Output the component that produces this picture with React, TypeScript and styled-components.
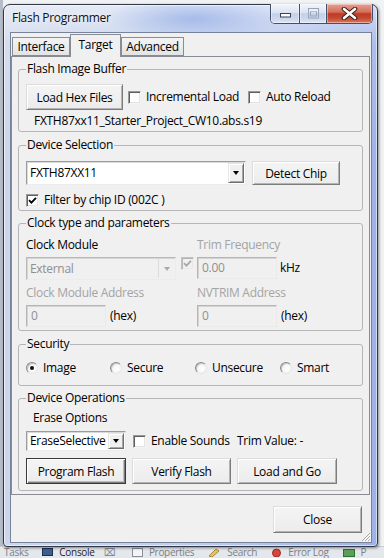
import React from "react";
import styled, { createGlobalStyle, css } from "styled-components";

const FONT = `"Open Sans", "Noto Sans", "DejaVu Sans", sans-serif`;

const GlobalStyle = createGlobalStyle`
  html, body { margin: 0; padding: 0; }
  body {
    width: 384px; height: 558px; overflow: hidden;
    font-family: ${FONT}; font-size: 12px; color: #000;
    letter-spacing: -0.3px;
    background: #eceef1;
  }
  * { box-sizing: border-box; }
`;

/* ---------- desktop (IDE behind the dialog) ---------- */
const Desktop = styled.div`
  position: relative;
  width: 384px;
  height: 558px;
  overflow: hidden;
  display: flex;
  flex-direction: column;
  justify-content: flex-end;
  background: linear-gradient(90deg, #b7bdc8 0px, #b7bdc8 3px, #f1f2f4 3px);
`;

const EclipseBar = styled.div`
  height: 12px;
  display: flex;
  align-items: flex-start;
  overflow: hidden;
  background: #e4e7eb;
  box-shadow: inset 0 1px 0 #c9ced6;
`;

const EclipseItem = styled.span<{ $ml: number; $dim?: boolean }>`
  margin-left: ${(p) => p.$ml}px;
  line-height: 12px;
  height: 12px;
  font-size: 10px;
  color: ${(p) => (p.$dim ? "#7b7f86" : "#1c1c1c")};
  white-space: nowrap;
  display: inline-flex;
  align-items: center;
`;

/* ---------- window frame ---------- */
const Window = styled.div`
  position: absolute;
  left: 3px;
  top: 4px;
  width: 375px;
  height: 543px;
  border: 1px solid #323946;
  border-radius: 7px 7px 4px 4px;
  padding: 0 5px 3px 6px;
  display: flex;
  flex-direction: column;
  background:
    radial-gradient(ellipse 90px 22px at 190px 14px, rgba(150, 175, 230, 0.75), rgba(150, 175, 230, 0)),
    linear-gradient(180deg, rgba(255, 255, 255, 0.55) 0px, rgba(255, 255, 255, 0.15) 40px, rgba(255, 255, 255, 0) 160px),
    linear-gradient(90deg, #cdd6ea 0%, #bccbec 55%, #9eb2e8 100%);
  box-shadow: inset 0 0 0 1px rgba(255, 255, 255, 0.55), 1px 1px 3px rgba(0, 0, 0, 0.45);
`;

const TitleBar = styled.div`
  height: 27px;
  flex: none;
  display: flex;
  align-items: flex-start;
`;

const TitleText = styled.div`
  margin: 5px 0 0 2px;
  line-height: 16px;
  font-size: 12px;
  color: #111;
  text-shadow: 0 0 6px rgba(255, 255, 255, 0.9);
`;

const CaptionGroup = styled.div`
  margin: -1px -1px 0 auto;
  height: 20px;
  display: flex;
  border: 1px solid #44506a;
  border-top: none;
  border-radius: 0 0 5px 5px;
  overflow: hidden;
`;

const CaptionButton = styled.div<{ $w: number; $close?: boolean; $divider?: boolean }>`
  width: ${(p) => p.$w}px;
  height: 19px;
  display: flex;
  align-items: center;
  justify-content: center;
  ${(p) => p.$divider && css`border-left: 1px solid #44506a;`}
  background: ${(p) =>
    p.$close
      ? "linear-gradient(180deg, #e5a092 0%, #d5705c 42%, #c03a22 52%, #c44a32 75%, #da7a62 100%)"
      : "linear-gradient(180deg, #f3f6fb 0%, #dbe3f2 45%, #c3d0ea 52%, #cdd8ef 80%, #dfe7f6 100%)"};
  box-shadow: inset 0 0 0 1px rgba(255, 255, 255, 0.4);
`;

const Client = styled.div`
  position: relative;
  flex: 1;
  display: flex;
  flex-direction: column;
  background: #f0f0f0;
  border: 1px solid #76839a;
`;

/* ---------- tabs ---------- */
const TabStrip = styled.div`
  height: 24px;
  flex: none;
  margin-bottom: -1px;
  padding-left: 1px;
  display: flex;
  align-items: flex-end;
`;

const Tab = styled.div<{ $w: number; $active?: boolean }>`
  position: relative;
  z-index: ${(p) => (p.$active ? 2 : 1)};
  width: ${(p) => p.$w}px;
  height: ${(p) => (p.$active ? 23 : 19)}px;
  margin-bottom: ${(p) => (p.$active ? 0 : 1)}px;
  display: flex;
  align-items: center;
  justify-content: center;
  padding-bottom: ${(p) => (p.$active ? 3 : 0)}px;
  border: 1px solid #898c95;
  border-bottom: ${(p) => (p.$active ? "none" : "1px solid #898c95")};
  background: ${(p) => (p.$active ? "#f0f0f0" : "linear-gradient(180deg, #f4f4f4 0%, #ececec 50%, #e3e3e3 100%)")};
  font-size: 12px;
  line-height: 16px;
  color: #000;
`;

const Panel = styled.div`
  position: relative;
  z-index: 1;
  flex: none;
  margin-right: 1px;
  padding: 4px 6px 3px 6px;
  border: 1px solid #898c95;
  background: #f0f0f0;
`;

/* ---------- group boxes ---------- */
const Group = styled.fieldset<{ $pt: number; $pb: number; $mt?: number }>`
  margin: ${(p) => p.$mt ?? 0}px 0 0 0;
  min-width: 0;
  padding: ${(p) => p.$pt}px 8px ${(p) => p.$pb}px 7px;
  border: 1px solid #b5b5b5;
  border-radius: 3px;
`;

const Legend = styled.legend`
  padding: 0 1px;
  font-size: 12px;
  line-height: 16px;
  color: #000;
`;

const Row = styled.div<{ $mt?: number; $h?: number; $align?: string }>`
  display: flex;
  align-items: ${(p) => p.$align ?? "center"};
  margin-top: ${(p) => p.$mt ?? 0}px;
  ${(p) => p.$h && css`height: ${p.$h}px;`}
`;

const TwoCols = styled.div<{ $mt?: number }>`
  display: grid;
  grid-template-columns: 171px 1fr;
  align-items: center;
  margin-top: ${(p) => p.$mt ?? 0}px;
`;

const RadioGrid = styled.div`
  display: grid;
  grid-template-columns: 84px 85px 85px auto;
  height: 16px;
  align-items: center;
`;

const Label = styled.span<{ $disabled?: boolean; $ml?: number; $mt?: number }>`
  display: block;
  line-height: 16px;
  height: 16px;
  white-space: nowrap;
  margin-left: ${(p) => p.$ml ?? 0}px;
  margin-top: ${(p) => p.$mt ?? 0}px;
  color: ${(p) => (p.$disabled ? "#a4a4a4" : "#000")};
`;

/* ---------- controls ---------- */
const Button = styled.button<{ $w: number; $h?: number; $default?: boolean; $ml?: number }>`
  width: ${(p) => p.$w}px;
  height: ${(p) => p.$h ?? 26}px;
  margin-left: ${(p) => p.$ml ?? 0}px;
  flex: none;
  padding: 0;
  font-family: ${FONT};
  font-size: 12px;
  letter-spacing: -0.3px;
  color: #000;
  background: linear-gradient(180deg, #f4f4f4 0%, #ececec 100%);
  border: 1px solid;
  border-color: #dcdcdc #7c7c7c #7c7c7c #dcdcdc;
  box-shadow: inset 1px 1px 0 #ffffff, inset -1px -1px 0 #b4b4b4;
  ${(p) =>
    p.$default &&
    css`
      border-color: #3a3a3a;
      box-shadow: inset 1px 1px 0 #ffffff, inset -1px -1px 0 #7c7c7c, inset -2px -2px 0 #bdbdbd;
    `}
`;

const CheckLabel = styled.label<{ $w?: number; $ml?: number; $disabled?: boolean }>`
  display: flex;
  align-items: center;
  gap: 5px;
  flex: none;
  ${(p) => p.$w && css`width: ${p.$w}px;`}
  margin-left: ${(p) => p.$ml ?? 0}px;
  line-height: 16px;
  white-space: nowrap;
  color: ${(p) => (p.$disabled ? "#a4a4a4" : "#000")};
`;

const Box = styled.span<{ $disabled?: boolean }>`
  width: 13px;
  height: 13px;
  flex: none;
  display: inline-flex;
  align-items: center;
  justify-content: center;
  border: 1px solid;
  border-color: ${(p) => (p.$disabled ? "#c2c2c2 #f2f2f2 #f2f2f2 #c2c2c2" : "#9a9a9a #f4f4f4 #f4f4f4 #9a9a9a")};
  background: ${(p) => (p.$disabled ? "#f0f0f0" : "#ffffff")};
  box-shadow: ${(p) =>
    p.$disabled ? "inset 1px 1px 0 #b4b4b4, inset -1px -1px 0 #e8e8e8" : "inset 1px 1px 0 #5f5f5f, inset -1px -1px 0 #e3e3e3"};
`;

const RadioLabel = styled.label`
  display: flex;
  align-items: center;
  gap: 5px;
  line-height: 16px;
  white-space: nowrap;
`;

const RadioCircle = styled.span<{ $on?: boolean }>`
  width: 12px;
  height: 12px;
  flex: none;
  border-radius: 50%;
  display: inline-flex;
  align-items: center;
  justify-content: center;
  border: 1px solid;
  border-color: #8c8c8c #e6e6e6 #e6e6e6 #8c8c8c;
  background: radial-gradient(circle at 60% 60%, #ffffff 0%, #f2f2f2 70%, #dcdcdc 100%);
  box-shadow: inset 1px 1px 0 #c4c4c4;
  &::after {
    content: "";
    display: ${(p) => (p.$on ? "block" : "none")};
    width: 4px;
    height: 4px;
    border-radius: 50%;
    background: #111;
  }
`;

const Combo = styled.div<{ $w: number; $h: number; $disabled?: boolean }>`
  width: ${(p) => p.$w}px;
  height: ${(p) => p.$h}px;
  flex: none;
  display: flex;
  align-items: stretch;
  border: 1px solid;
  border-color: ${(p) => (p.$disabled ? "#b9b9b9 #ececec #ececec #b9b9b9" : "#9c9c9c #ececec #ececec #9c9c9c")};
  background: ${(p) => (p.$disabled ? "#f0f0f0" : "#ffffff")};
  box-shadow: ${(p) => (p.$disabled ? "inset 1px 1px 0 #d6d6d6" : "inset 1px 1px 0 #d9d9d9")};
`;

const ComboText = styled.span<{ $disabled?: boolean }>`
  flex: 1;
  min-width: 0;
  display: flex;
  align-items: center;
  padding-left: 3px;
  line-height: 16px;
  white-space: nowrap;
  overflow: hidden;
  color: ${(p) => (p.$disabled ? "#8f8f8f" : "#000")};
`;

const DropButton = styled.span<{ $disabled?: boolean }>`
  width: 16px;
  flex: none;
  margin: 1px 1px 1px 0;
  display: flex;
  align-items: center;
  justify-content: center;
  ${(p) =>
    p.$disabled
      ? css`
          border-left: 1px solid #dcdcdc;
          background: #f0f0f0;
        `
      : css`
          border: 1px solid;
          border-color: #e6e6e6 #6e6e6e #6e6e6e #e6e6e6;
          box-shadow: inset 1px 1px 0 #ffffff, inset -1px -1px 0 #a8a8a8;
          background: #f0f0f0;
        `}
`;

const Arrow = styled.span<{ $disabled?: boolean }>`
  width: 0;
  height: 0;
  border-left: 3.5px solid transparent;
  border-right: 3.5px solid transparent;
  border-top: 4px solid ${(p) => (p.$disabled ? "#a9a9a9" : "#000")};
`;

const Input = styled.div<{ $w: number; $h: number; $ml?: number }>`
  width: ${(p) => p.$w}px;
  height: ${(p) => p.$h}px;
  margin-left: ${(p) => p.$ml ?? 0}px;
  flex: none;
  display: flex;
  align-items: center;
  padding-left: 4px;
  line-height: 16px;
  color: #8f8f8f;
  background: #f0f0f0;
  border: 1px solid;
  border-color: #b5b5b5 #eaeaea #eaeaea #b5b5b5;
  box-shadow: inset 1px 1px 0 #d4d4d4;
`;

const ButtonRow = styled.div<{ $mt: number }>`
  display: flex;
  gap: 6px;
  margin-top: ${(p) => p.$mt}px;
`;

const Footer = styled.div`
  flex: 1;
  display: flex;
  justify-content: flex-end;
  align-items: flex-start;
  padding: 11px 9px 0 0;
`;

const SizeGrip = styled.svg`
  position: absolute;
  right: 0;
  bottom: 0;
`;

/* ---------- small pieces ---------- */
const CheckMark = ({ color = "#000" }: { color?: string }) => (
  <svg width="9" height="9" viewBox="0 0 9 9">
    <polyline points="1,4.2 3.4,6.6 8,1.8" fill="none" stroke={color} strokeWidth="1.8" />
  </svg>
);

const Check = ({
  children,
  checked,
  disabled,
  w,
  ml,
}: {
  children?: React.ReactNode;
  checked?: boolean;
  disabled?: boolean;
  w?: number;
  ml?: number;
}) => (
  <CheckLabel $w={w} $ml={ml} $disabled={disabled}>
    <Box $disabled={disabled}>{checked && <CheckMark color={disabled ? "#a8a8a8" : "#000"} />}</Box>
    {children}
  </CheckLabel>
);

const Radio = ({ children, on }: { children: React.ReactNode; on?: boolean }) => (
  <RadioLabel>
    <RadioCircle $on={on} />
    {children}
  </RadioLabel>
);

const Dropdown = ({
  w,
  h,
  value,
  disabled,
}: {
  w: number;
  h: number;
  value: string;
  disabled?: boolean;
}) => (
  <Combo $w={w} $h={h} $disabled={disabled}>
    <ComboText $disabled={disabled}>{value}</ComboText>
    <DropButton $disabled={disabled}>
      <Arrow $disabled={disabled} />
    </DropButton>
  </Combo>
);

const MinGlyph = () => (
  <svg width="13" height="8" viewBox="0 0 13 8">
    <rect x="1.5" y="3.5" width="10" height="3.5" fill="#fff" stroke="#3a4252" strokeWidth="1" />
  </svg>
);

const MaxGlyph = () => (
  <svg width="13" height="11" viewBox="0 0 13 11">
    <rect x="1.5" y="0.5" width="10" height="9.5" fill="none" stroke="#9aa5b8" strokeWidth="1" />
    <rect x="3.5" y="3.5" width="6" height="4.5" fill="none" stroke="#9aa5b8" strokeWidth="1" />
    <rect x="2.5" y="1.5" width="8" height="1.8" fill="#eef2f9" />
  </svg>
);

const CloseGlyph = () => (
  <svg width="17" height="13" viewBox="0 0 17 13">
    <path d="M3 2 L14 11 M14 2 L3 11" stroke="#3b1f1b" strokeWidth="4.6" strokeLinecap="round" />
    <path d="M3 2 L14 11 M14 2 L3 11" stroke="#ffffff" strokeWidth="2.6" strokeLinecap="round" />
  </svg>
);

const EIcon = styled.svg`
  margin-right: 6px;
  flex: none;
`;

export default function App() {
  return (
    <>
      <GlobalStyle />
      <Desktop>
        <EclipseBar>
          <EclipseItem $ml={4} $dim>
            Tasks
          </EclipseItem>
          <EclipseItem $ml={14}>
            <EIcon width="11" height="9" viewBox="0 0 11 9">
              <rect x="0.5" y="0.5" width="10" height="7" fill="#3d5f8f" stroke="#1d2f4f" />
            </EIcon>
            Console
          </EclipseItem>
          <EclipseItem $ml={9} $dim>
            ⌧
          </EclipseItem>
          <EclipseItem $ml={17} $dim>
            <EIcon width="11" height="9" viewBox="0 0 11 9">
              <rect x="0.5" y="0.5" width="10" height="8" fill="#f4f4f4" stroke="#8a8f98" />
            </EIcon>
            Properties
          </EclipseItem>
          <EclipseItem $ml={14} $dim>
            <EIcon width="13" height="9" viewBox="0 0 13 9">
              <path d="M1 8 L8 1 L11 3 L4 9 Z" fill="#e6c65a" stroke="#a8893a" />
            </EIcon>
            Search
          </EclipseItem>
          <EclipseItem $ml={14} $dim>
            <EIcon width="11" height="9" viewBox="0 0 11 9">
              <circle cx="5.5" cy="5" r="4" fill="#d8463a" stroke="#9c2a22" />
            </EIcon>
            Error Log
          </EclipseItem>
          <EclipseItem $ml={14} $dim>
            <EIcon width="12" height="9" viewBox="0 0 12 9">
              <rect x="0.5" y="1.5" width="11" height="7" fill="#5aa05a" stroke="#2f6f2f" />
            </EIcon>
            P
          </EclipseItem>
        </EclipseBar>

        <Window>
          <TitleBar>
            <TitleText>Flash Programmer</TitleText>
            <CaptionGroup>
              <CaptionButton $w={28}>
                <MinGlyph />
              </CaptionButton>
              <CaptionButton $w={27} $divider>
                <MaxGlyph />
              </CaptionButton>
              <CaptionButton $w={46} $divider $close>
                <CloseGlyph />
              </CaptionButton>
            </CaptionGroup>
          </TitleBar>

          <Client>
            <TabStrip>
              <Tab $w={58}>Interface</Tab>
              <Tab $w={51} $active>
                Target
              </Tab>
              <Tab $w={63}>Advanced</Tab>
            </TabStrip>

            <Panel>
              <Group $pt={7} $pb={2}>
                <Legend>Flash Image Buffer</Legend>
                <Row $h={26}>
                  <Button $w={97}>Load Hex Files</Button>
                  <Check ml={5} w={120}>
                    Incremental Load
                  </Check>
                  <Check>Auto Reload</Check>
                </Row>
                <Label $ml={8} $mt={3}>
                  FXTH87xx11_Starter_Project_CW10.abs.s19
                </Label>
              </Group>

              <Group $pt={8} $pb={2} $mt={5}>
                <Legend>Device Selection</Legend>
                <Row $h={24}>
                  <Dropdown w={220} h={24} value="FXTH87XX11" />
                  <Button $w={88} $h={24} $ml={6}>
                    Detect Chip
                  </Button>
                </Row>
                <Row $mt={7} $h={16}>
                  <Check checked>Filter by chip ID (002C )</Check>
                </Row>
              </Group>

              <Group $pt={6} $pb={3} $mt={4}>
                <Legend>Clock type and parameters</Legend>
                <TwoCols>
                  <Label>Clock Module</Label>
                  <Label $disabled>Trim Frequency</Label>
                </TwoCols>
                <Row $mt={4} $h={23} $align="flex-start">
                  <Dropdown w={150} h={23} value="External" disabled />
                  <Check checked disabled ml={5} />
                  <Input $w={80} $h={22} $ml={3}>
                    0.00
                  </Input>
                  <Label $ml={3} $mt={3}>
                    kHz
                  </Label>
                </Row>
                <TwoCols $mt={5}>
                  <Label $disabled>Clock Module Address</Label>
                  <Label $disabled>NVTRIM Address</Label>
                </TwoCols>
                <TwoCols $mt={4}>
                  <Row>
                    <Input $w={80} $h={22}>
                      0
                    </Input>
                    <Label $ml={4}>(hex)</Label>
                  </Row>
                  <Row>
                    <Input $w={80} $h={22}>
                      0
                    </Input>
                    <Label $ml={4}>(hex)</Label>
                  </Row>
                </TwoCols>
              </Group>

              <Group $pt={8} $pb={9} $mt={5}>
                <Legend>Security</Legend>
                <RadioGrid>
                  <Radio on>Image</Radio>
                  <Radio>Secure</Radio>
                  <Radio>Unsecure</Radio>
                  <Radio>Smart</Radio>
                </RadioGrid>
              </Group>

              <Group $pt={4} $pb={6} $mt={4}>
                <Legend>Device Operations</Legend>
                <Label $ml={7}>Erase Options</Label>
                <Row $mt={5} $h={20}>
                  <Dropdown w={100} h={20} value="EraseSelective" />
                  <Check ml={7} w={104}>
                    Enable Sounds
                  </Check>
                  <Label>Trim Value: -</Label>
                </Row>
                <ButtonRow $mt={7}>
                  <Button $w={100} $default>
                    Program Flash
                  </Button>
                  <Button $w={99}>Verify Flash</Button>
                  <Button $w={100}>Load and Go</Button>
                </ButtonRow>
              </Group>
            </Panel>

            <Footer>
              <Button $w={89} $h={27}>
                Close
              </Button>
            </Footer>

            <SizeGrip width="12" height="12" viewBox="0 0 12 12">
              <path d="M11 3 L3 11 M11 6 L6 11 M11 9 L9 11" stroke="#a8a8a8" strokeWidth="1" />
              <path d="M12 4 L4 12 M12 7 L7 12 M12 10 L10 12" stroke="#ffffff" strokeWidth="1" />
            </SizeGrip>
          </Client>
        </Window>
      </Desktop>
    </>
  );
}
